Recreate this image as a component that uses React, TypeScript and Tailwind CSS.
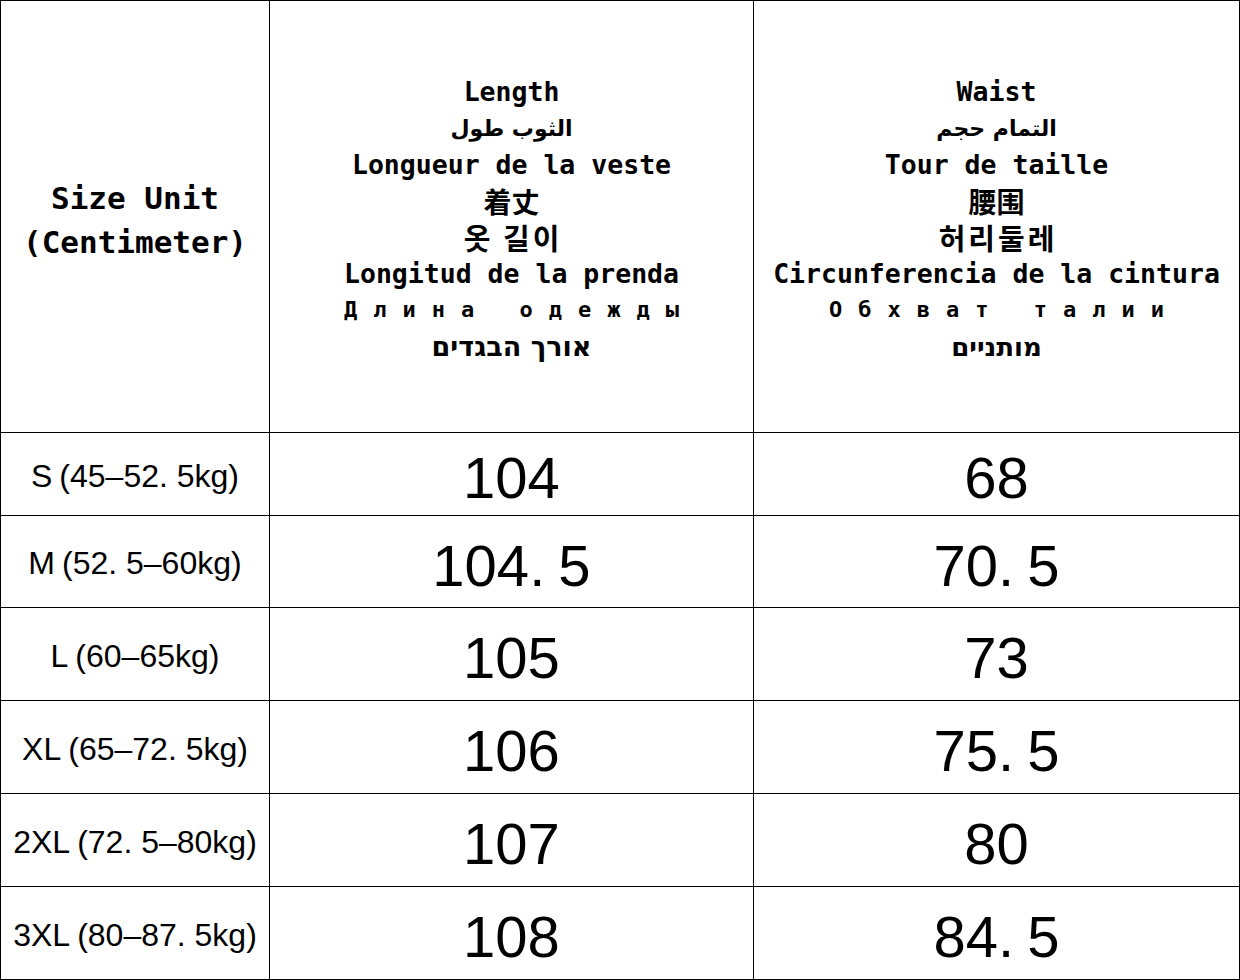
const rows = [
  { size: 'S', range: '45–52. 5kg', length: '104', waist: '68' },
  { size: 'M', range: '52. 5–60kg', length: '104. 5', waist: '70. 5' },
  { size: 'L', range: '60–65kg', length: '105', waist: '73' },
  { size: 'XL', range: '65–72. 5kg', length: '106', waist: '75. 5' },
  { size: '2XL', range: '72. 5–80kg', length: '107', waist: '80' },
  { size: '3XL', range: '80–87. 5kg', length: '108', waist: '84. 5' },
];

type HeaderText = {
  en: string;
  ar: string;
  fr: string;
  zh: string;
  ko: string;
  es: string;
  ru: string;
  he: string;
  heSize: string;
};

const length: HeaderText = {
  en: 'Length',
  ar: 'الثوب طول',
  fr: 'Longueur de la veste',
  zh: '着丈',
  ko: '옷 길이',
  es: 'Longitud de la prenda',
  ru: 'Длина одежды',
  he: 'אורך הבגדים',
  heSize: 'text-[27px]',
};

const waist: HeaderText = {
  en: 'Waist',
  ar: 'التمام حجم',
  fr: 'Tour de taille',
  zh: '腰围',
  ko: '허리둘레',
  es: 'Circunferencia de la cintura',
  ru: 'Обхват талии',
  he: 'מותניים',
  heSize: 'text-[26px]',
};

const Line = ({ children, className }: { children: React.ReactNode; className: string }) => (
  <div className={`h-[36.3px] flex items-center justify-center whitespace-nowrap leading-none ${className}`}>
    {children}
  </div>
);

const HeaderCell = ({ t }: { t: HeaderText }) => {
  const mono = "font-['DejaVu_Sans_Mono',monospace] font-bold text-[26.5px]";
  return (
    <div className="bg-white flex flex-col items-center justify-center pt-[6px]">
      <Line className={mono}>{t.en}</Line>
      <Line className="font-['DejaVu_Sans',sans-serif] font-bold text-[22px]">
        <span dir="rtl">{t.ar}</span>
      </Line>
      <Line className={mono}>{t.fr}</Line>
      <Line className="font-['Noto_Sans_CJK_SC',sans-serif] font-bold text-[28px]">{t.zh}</Line>
      <Line className="font-['Noto_Sans_CJK_KR',sans-serif] font-bold text-[29px] tracking-[3px] pl-[3px]">
        {t.ko}
      </Line>
      <Line className={mono}>{t.es}</Line>
      <Line className="font-['DejaVu_Sans_Mono',monospace] font-bold text-[22px] tracking-[16px] pl-[16px]">
        {t.ru}
      </Line>
      <Line className={`font-['DejaVu_Sans',sans-serif] font-bold ${t.heSize}`}>
        <span dir="rtl">{t.he}</span>
      </Line>
    </div>
  );
};

export default function App() {
  return (
    <div className="w-[1240px] h-[980px] bg-white text-black">
      <div className="grid grid-cols-[268px_483px_485px] grid-rows-[431px_82px_91px_92px_92px_92px_92px] gap-px bg-black p-px">
        <div className="bg-white flex flex-col items-center justify-center pt-[6px] font-['DejaVu_Sans_Mono',monospace] font-bold text-[31px] leading-[44px]">
          <div>Size Unit</div>
          <div>(Centimeter)</div>
        </div>
        <HeaderCell t={length} />
        <HeaderCell t={waist} />

        {rows.map((r) => (
          <div key={r.size} className="contents">
            <div className="bg-white flex items-center justify-center pt-[3px] whitespace-pre font-['Liberation_Sans',sans-serif] text-[32px] leading-none">
              <span>{r.size}</span>
              <span className="ml-[7px]">({r.range})</span>
            </div>
            <div className="bg-white flex items-center justify-center pt-2 whitespace-pre font-['Liberation_Sans',sans-serif] text-[58px] leading-none [word-spacing:-3px]">
              {r.length}
            </div>
            <div className="bg-white flex items-center justify-center pt-2 whitespace-pre font-['Liberation_Sans',sans-serif] text-[58px] leading-none [word-spacing:-3px]">
              {r.waist}
            </div>
          </div>
        ))}
      </div>
    </div>
  );
}
